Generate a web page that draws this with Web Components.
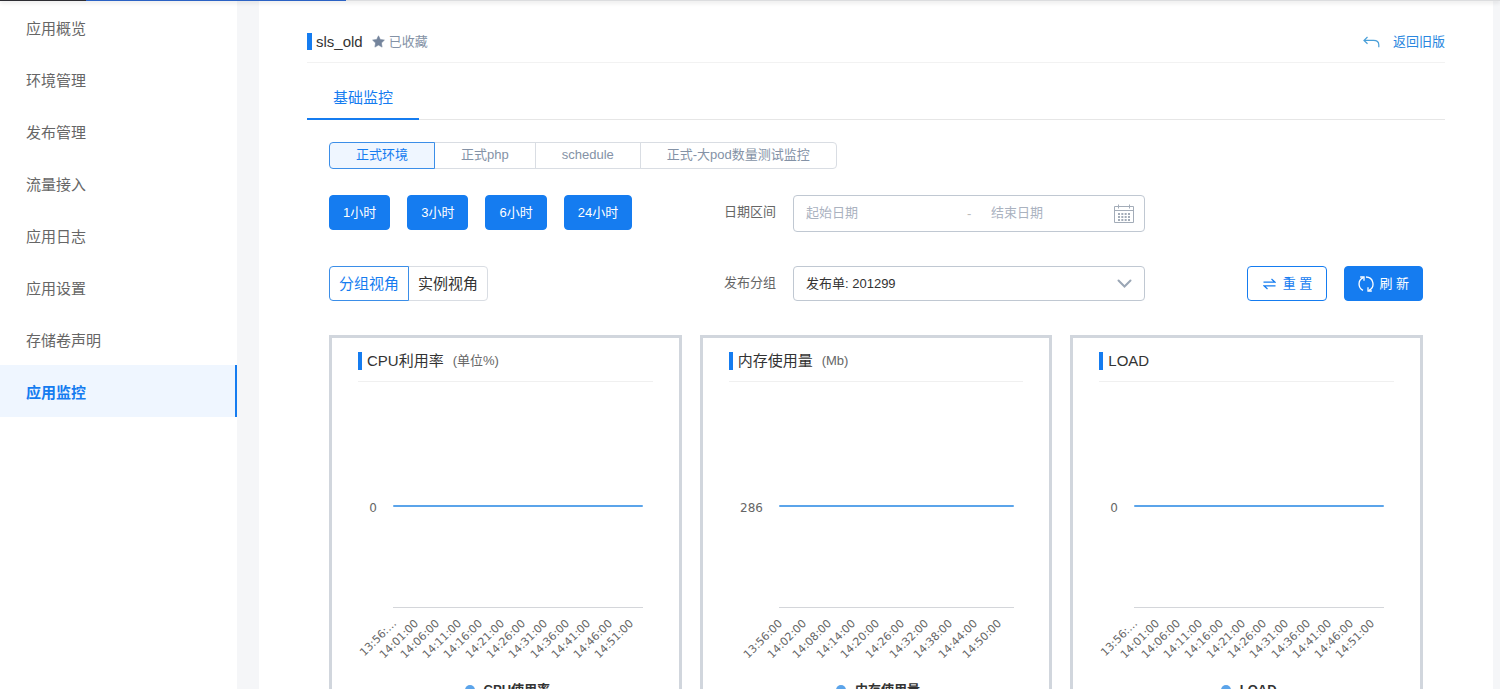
<!DOCTYPE html>
<html lang="zh-CN">
<head>
<meta charset="utf-8">
<meta name="viewport" content="width=device-width, initial-scale=1">
<title>应用监控</title>
<style>
html, body { margin: 0; height: 100%; }
body {
  background: #f5f6f8;
  font-family: "Liberation Sans", "Noto Sans CJK SC", sans-serif;
  font-size: 13px;
  line-height: 20px;
  color: #333;
  --primary: #157cf0;
  --link: #2a87e0;
}
</style>
</head>
<body>
<monitor-app>
  <side-nav slot="nav">
    <nav-item>应用概览</nav-item>
    <nav-item>环境管理</nav-item>
    <nav-item>发布管理</nav-item>
    <nav-item>流量接入</nav-item>
    <nav-item>应用日志</nav-item>
    <nav-item>应用设置</nav-item>
    <nav-item>存储卷声明</nav-item>
    <nav-item active>应用监控</nav-item>
  </side-nav>
  <page-title slot="title" name="sls_old"></page-title>
  <tab-bar slot="tabs">基础监控</tab-bar>
  <seg-control slot="envs" items="正式环境|正式php|schedule|正式-大pod数量测试监控"></seg-control>
  <filter-panel slot="filters"></filter-panel>
  <div slot="charts" style="display:contents">
    <chart-card name="CPU利用率" unit="(单位%)" series="CPU使用率" value="0" left="35" every="5"
      labels="13:56:…,14:01:00,14:06:00,14:11:00,14:16:00,14:21:00,14:26:00,14:31:00,14:36:00,14:41:00,14:46:00,14:51:00"></chart-card>
    <chart-card name="内存使用量" unit="(Mb)" series="内存使用量" value="286" left="50" every="6"
      labels="13:56:00,14:02:00,14:08:00,14:14:00,14:20:00,14:26:00,14:32:00,14:38:00,14:44:00,14:50:00"></chart-card>
    <chart-card name="LOAD" unit="" series="LOAD" value="0" left="35" every="5"
      labels="13:56:…,14:01:00,14:06:00,14:11:00,14:16:00,14:21:00,14:26:00,14:31:00,14:36:00,14:41:00,14:46:00,14:51:00"></chart-card>
  </div>
</monitor-app>

<script>
const define = (name, render, after) => customElements.define(name, class extends HTMLElement {
  connectedCallback() {
    if (this.shadowRoot) return;
    this.attachShadow({ mode: 'open' }).innerHTML = render(this);
    if (after) after(this, this.shadowRoot);
  }
});

define('monitor-app', () => `
<style>
:host { display: flex; flex-direction: column; height: 100vh; overflow: hidden; }
.strip { flex: none; height: 1px; display: flex; background: #dcdddf; box-shadow: 0 1px 4px rgba(0,0,0,.3); z-index: 1; }
.strip i:nth-child(1) { width: 86px; background: #2d2d33; }
.strip i:nth-child(2) { width: 260px; background: #2b62c4; }
.body { flex: 1; min-height: 0; display: flex; gap: 22px; padding-right: 7px; }
main { flex: 1; min-width: 0; box-sizing: border-box; padding: 20px 48px; background: #fff; overflow: auto; scrollbar-width: none; }
.panel { padding: 22px 22px 0; }
.charts { display: grid; grid-template-columns: repeat(3, minmax(0, 1fr)); gap: 18px; margin-top: 34px; }
</style>
<div class="strip"><i></i><i></i></div>
<div class="body">
  <slot name="nav"></slot>
  <main>
    <slot name="title"></slot>
    <slot name="tabs"></slot>
    <div class="panel">
      <slot name="envs"></slot>
      <slot name="filters"></slot>
      <div class="charts"><slot name="charts"></slot></div>
    </div>
  </main>
</div>`);

define('side-nav', () => `
<style>
:host { display: block; flex: none; width: 237px; background: #fff; }
nav { display: flex; flex-direction: column; }
</style>
<nav><slot></slot></nav>`);

define('nav-item', () => `
<style>
:host { display: block; }
a { display: block; box-sizing: border-box; height: 52px; padding: 0 26px; line-height: 55px; font-size: 15px; color: #666; text-decoration: none; }
:host([active]) a { color: var(--primary); font-weight: 700; background: #eff6ff; border-right: 2px solid var(--primary); }
</style>
<a href="#"><slot></slot></a>`);

define('page-title', el => `
<style>
:host { display: flex; align-items: center; height: 41px; border-bottom: 1px solid #f2f2f2; }
h1 { margin: 0; font-size: 15px; font-weight: 400; line-height: 18px; display: flex; gap: 4px; }
h1::before { content: ""; width: 5px; height: 17px; background: var(--primary); }
.fav { display: flex; align-items: center; gap: 4px; margin-left: 9px; color: #8492a6; }
a { margin-left: auto; display: flex; align-items: center; gap: 13px; color: var(--link); text-decoration: none; }
</style>
<h1>${el.getAttribute('name')}</h1>
<span class="fav"><svg width="13" height="13" viewBox="0 0 13 13"><path fill="#74849c" stroke="#74849c" stroke-width=".6" stroke-linejoin="round" d="M6.500.8l1.800 3.700 4.100.6-3 2.900.7 4.100-3.600-2-3.600 2 .7-4.100-3-2.900 4.100-.6z"/></svg>已收藏</span>
<a href="#"><svg width="17" height="13" viewBox="0 0 17 13" fill="none" stroke="#4a9fd8" stroke-width="1.200"><path d="M4.500 2L1 5.400l3.500 3.400M1 5.400h9.500c3.600 0 5.300 1.800 5.300 4.400v2.400"/></svg>返回旧版</a>`);

define('tab-bar', () => `
<style>
:host { display: flex; height: 56px; border-bottom: 1px solid #e6e6e6; }
button { all: unset; box-sizing: border-box; height: 57px; padding: 14px 26px 0; font-size: 15px; line-height: 40px; color: var(--primary); border-bottom: 2px solid var(--primary); cursor: pointer; }
</style>
<div role="tablist"><button role="tab" aria-selected="true"><slot></slot></button></div>`);

define('seg-control', el => `
<style>
:host { display: flex; }
button { box-sizing: border-box; font: inherit; margin: 0 0 0 -1px; border: 1px solid #d9dde3; background: #fff; cursor: pointer; padding: 0 26px; height: 27px; line-height: 20px; padding-bottom: 2px; color: #8492a6; }
button:first-of-type { margin: 0; border-radius: 4px 0 0 4px; }
button:last-of-type { border-radius: 0 4px 4px 0; }
button[aria-pressed=true] { color: var(--primary); border-color: #3b8ee8; background: #eff6ff; position: relative; }
:host([large]) button { font-size: 15px; height: 35px; line-height: 33px; padding: 0 9px; color: #333; }
:host([large]) button[aria-pressed=true] { color: var(--primary); background: #fff; }
</style>` + el.getAttribute('items').split('|').map((t, i) => `<button type="button" aria-pressed="${i === 0}">${t}</button>`).join(''));

define('filter-panel', () => `
<style>
:host { display: grid; grid-template-columns: 395fr 421fr 278fr; row-gap: 34px; margin-top: 26px; }
.quick, .actions { display: flex; gap: 17px; align-items: flex-start; }
.actions { justify-content: flex-end; grid-column: 3; }
.btn { box-sizing: border-box; height: 35px; border: 1px solid var(--primary); border-radius: 4px; padding: 0 13px; font: inherit; line-height: 33px; background: var(--primary); color: #fff; cursor: pointer; }
.actions .btn { display: flex; align-items: center; gap: 5px; }
.actions .ghost { background: #fff; color: var(--primary); padding: 0 14px 0 15px; gap: 7px; }
.field { display: flex; }
.field > label { flex: none; width: 69px; line-height: 34px; color: #666; }
.box { flex: 1; min-width: 0; box-sizing: border-box; display: flex; align-items: center; border: 1px solid #c0c8d2; border-radius: 4px; background: #fff; padding: 0 10px 0 12px; }
.range { height: 37px; }
.range input { flex: 161; min-width: 0; width: 0; border: 0; outline: 0; padding: 0 0 3px; margin: 0; font: inherit; height: 32px; background: none; }
.range input:last-of-type { flex: 123; }
.range span { width: 24px; color: #bbb; }
::placeholder { color: #aab2bf; opacity: 1; }
.sel { height: 35px; padding: 0 12px 0 0; }
select { appearance: none; flex: 1; border: 0; outline: 0; background: none; font: inherit; color: #333; height: 33px; padding: 0 0 0 12px; margin: 0; }
</style>
<div class="quick">
  <button class="btn" type="button">1小时</button><button class="btn" type="button">3小时</button><button class="btn" type="button">6小时</button><button class="btn" type="button">24小时</button>
</div>
<div class="field"><label for="start">日期区间</label>
  <div class="box range"><input id="start" type="text" placeholder="起始日期"><span>-</span><input type="text" aria-label="结束日期" placeholder="结束日期">
  <svg width="20" height="20" viewBox="0 0 20 20" fill="none" stroke="#a3acb8"><path d="M.5 2.500h19v16H.5zM.5 6.500h19M4.500.5v4M15.500.5v4"/><path stroke-width="2" stroke-dasharray="2 1.330" d="M4 10h12M4 13h12M4 16h12"/></svg></div>
</div>
<seg-control large items="分组视角|实例视角" style="grid-column:1"></seg-control>
<div class="field"><label for="group">发布分组</label>
  <div class="box sel"><select id="group"><option>发布单: 201299</option></select>
  <svg width="15" height="9" viewBox="0 0 15 9" fill="none" stroke="#9aa6b5" stroke-width="2" stroke-linecap="round"><path d="M1.500 1.500l6 6 6-6"/></svg></div>
</div>
<div class="actions">
  <button class="btn ghost" type="button"><svg width="13" height="12" viewBox="0 0 13 12" fill="none" stroke="currentColor" stroke-width="1.200"><path d="M.5 4.200h11.500L8.500 1M12.500 7.800H1L4.500 11"/></svg>重 置</button>
  <button class="btn" type="button"><svg width="16" height="16" viewBox="0 0 16 16" fill="none" stroke="#fff" stroke-width="1.300"><path d="M5 14.300A7 7 0 0 1 5.200 1.600M8 1A7 7 0 0 1 11 14.300"/><path d="M2.200 1h3.800v3.800M13.800 15H10v-3.800"/></svg>刷 新</button>
</div>`);

function drawChart(el, svg) {
  const width = Math.round(svg.clientWidth);
  const left = +el.getAttribute('left');
  const right = width - 10;
  const step = (right - left) / 58;
  const every = +el.getAttribute('every');
  const labels = el.getAttribute('labels').split(',').map((t, i) => {
    const x = Math.round(left + step / 2 + i * every * step) + 2;
    return `<text x="${x}" y="242" font-size="11" text-anchor="end" transform="rotate(-45 ${x} 242)">${t}</text>`;
  }).join('');
  svg.innerHTML = `
    <text x="${left - 16}" y="130" font-size="12" text-anchor="end">${el.getAttribute('value')}</text>
    <path d="M${left + 1} 124H${right - 1}" stroke="#5ba4ea" stroke-width="2" stroke-linecap="round"/>
    <path d="M${left} 225.500H${right}" stroke="#d4d6da"/>
    ${labels}`;
}

define('chart-card', el => `
<style>
:host { display: block; box-sizing: border-box; border: 3px solid #d1d6dd; padding: 0 26px 20px; background: #fff; min-width: 0; }
h2 { display: flex; align-items: center; margin: 0; height: 42px; padding-top: 1px; font-size: 15px; font-weight: 400; border-bottom: 1px solid #f0f0f0; }
h2::before { content: ""; width: 4px; height: 18px; margin-right: 5px; background: var(--primary); }
h2 { box-sizing: border-box; height: 44px; padding-top: 2px; }
small { font-size: 13px; color: #666; margin-left: 9px; }
svg { display: block; width: 100%; height: 298px; overflow: visible; font-family: "DejaVu Sans", sans-serif; fill: #666; }
.legend { display: flex; justify-content: center; align-items: center; gap: 9px; font-weight: 700; padding-left: 4px; }
.legend::before { content: ""; width: 10px; height: 10px; border-radius: 5px; background: #5ba4ea; }
</style>
<h2>${el.getAttribute('name')}<small>${el.getAttribute('unit')}</small></h2>
<svg role="img" aria-label="${el.getAttribute('series')}"></svg>
<div class="legend">${el.getAttribute('series')}</div>`,
(el, root) => {
  const svg = root.querySelector('svg');
  drawChart(el, svg);
  new ResizeObserver(() => drawChart(el, svg)).observe(svg);
});
</script>
</body>
</html>
